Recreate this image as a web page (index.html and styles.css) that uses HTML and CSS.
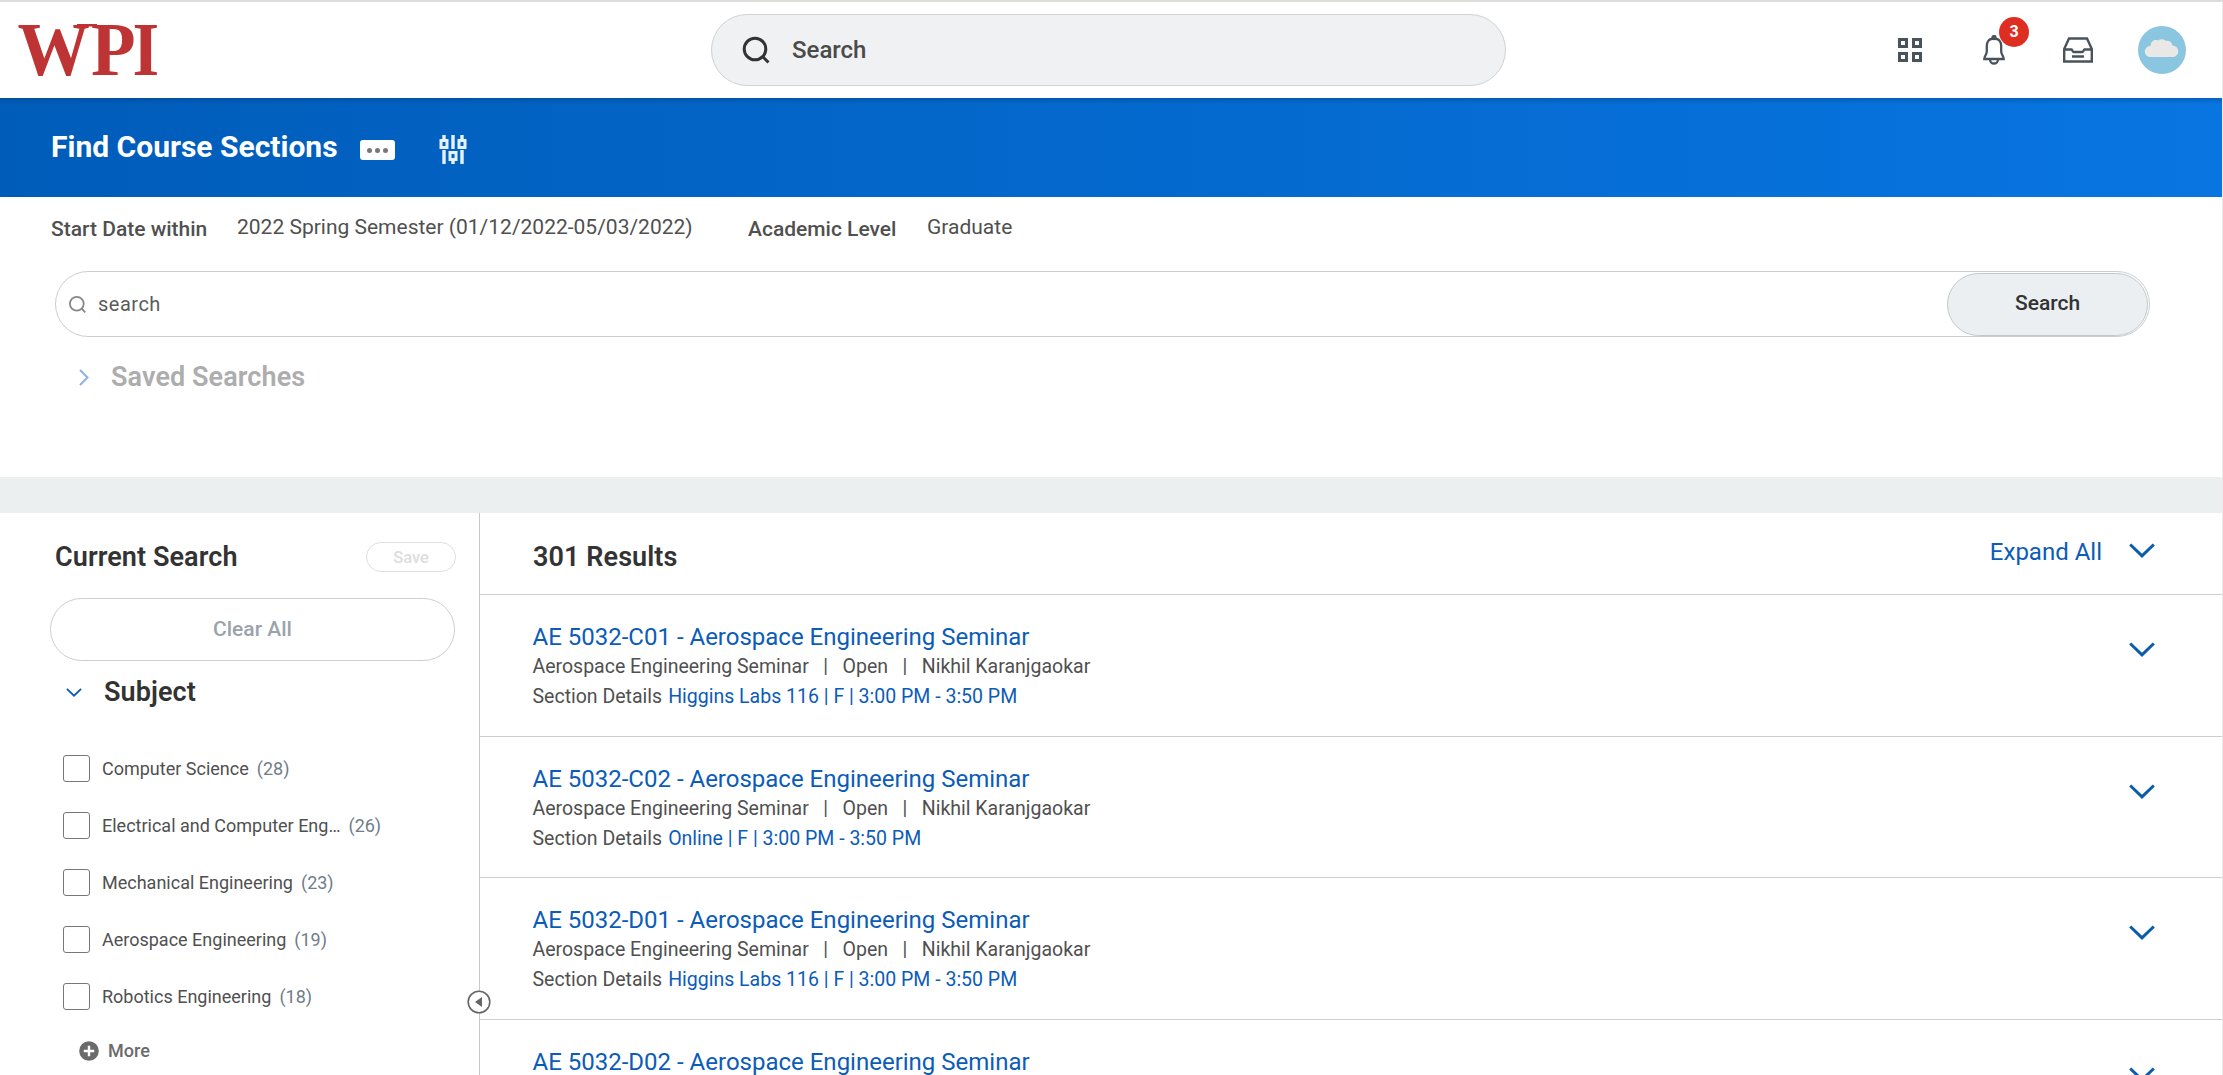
FILE: index.html
```html
<!DOCTYPE html>
<html lang="en">
<head>
<meta charset="utf-8">
<title>Find Course Sections</title>
<link rel="stylesheet" href="styles.css">
</head>
<body>
<svg class="defs" width="0" height="0">
  <symbol id="chevron" viewBox="0 0 26 15"><path d="M1.2 1.5 13 12.8 24.8 1.5" fill="none" stroke="currentColor" stroke-width="3"/></symbol>
</svg>
<div class="page">
  <header class="topbar">
    <svg class="logo" width="150" height="60" viewBox="0 0 150 60">
      <text transform="translate(.5 55) scale(.94 1)">W</text>
      <text transform="translate(74 55) scale(.95 1)">P</text>
      <text transform="translate(115.500 55) scale(.89 1)">I</text>
      <rect x="60" y="4" width="20" height="2.500"/>
    </svg>
    <div class="global-search">
      <svg width="28" height="28" viewBox="0 0 28 28" fill="none" stroke="#333" stroke-width="3"><circle cx="13" cy="13" r="10.8"/><path d="m20.5 20.5 6 6"/></svg>
      <span>Search</span>
    </div>
    <nav class="tools">
      <svg class="apps" width="24" height="24" viewBox="0 0 24 24" fill="none" stroke="#4a535b" stroke-width="3"><path d="M1.5 1.5h7v7h-7zM15.5 1.5h7v7h-7zM1.5 15.5h7v7h-7zM15.5 15.5h7v7h-7z"/></svg>
      <div class="bell">
        <svg width="24" height="30" viewBox="0 0 24 30" fill="none" stroke="#4a535b" stroke-width="2.3"><path d="M12 3.500C6.500 3.500 4.800 7.500 4.800 11v5.500c0 3-2.500 4.500-2.500 7.500h19.400c0-3-2.500-4.500-2.500-7.500V11c0-3.500-1.700-7.500-7.200-7.500z"/><path d="M8 24.500a4 4 0 0 0 8 0"/><circle cx="12" cy="2.500" r="1.500" fill="#4a535b"/></svg>
        <span class="badge">3</span>
      </div>
      <svg class="inbox" width="30" height="26" viewBox="0 0 30 26" fill="none" stroke="#4a535b" stroke-width="2.4"><path d="M1.200 12 6 1.500h18L28.800 12v12.500H1.200zM1.200 12.500h7.300c1 0 .8 2.500 2 2.500h9c1.200 0 1-2.500 2-2.500h7.300M9 19.500h12"/></svg>
      <svg class="avatar" width="48" height="48" viewBox="0 0 48 48"><circle cx="24" cy="24" r="24" fill="#8bc6e0"/><path d="M12 31a5 5 0 0 1 .5-11c.5-5 4-7 7.500-5.500 2.500-2 6-1.500 8 .5 3.500-1 6 1.500 6.500 4.500a5.800 5.800 0 0 1 1 11.500z" fill="#e9e8e6"/></svg>
    </nav>
  </header>

  <section class="titlebar">
    <h1>Find Course Sections</h1>
    <span class="more-actions"><i></i><i></i><i></i></span>
    <svg class="filters" width="28" height="29" viewBox="0 0 28 29" fill="none" stroke="#e6f3ff" stroke-width="3"><path d="M5 0v5M14 0v14M23 0v5M5 15v14M14 16v3M14 25v4M23 15v14" stroke-width="3.400"/><path d="M2 5.500h6v7H2zM20 5.500h6v7h-6zM11 17.500h6v7h-6z"/></svg>
  </section>

  <section class="criteria">
    <dl class="facts">
      <dt class="f1">Start Date within</dt><dd class="f2">2022 Spring Semester (01/12/2022-05/03/2022)</dd>
      <dt class="f3">Academic Level</dt><dd>Graduate</dd>
    </dl>
    <div class="search-box">
      <svg width="17" height="17" viewBox="0 0 17 17" fill="none" stroke="#888" stroke-width="1.800"><circle cx="7.800" cy="7.800" r="6.900"/><path d="m12.700 12.700 3.600 3.600"/></svg>
      <span class="query">search</span>
      <button>Search</button>
    </div>
    <div class="saved">
      <svg width="10" height="17" viewBox="0 0 10 17"><path d="m1 1 7.500 7.500L1 16" fill="none" stroke="#8db1e2" stroke-width="2"/></svg>
      <h2>Saved Searches</h2>
    </div>
  </section>

  <main class="results-layout">
    <aside class="sidebar">
      <div class="current"><h2>Current Search</h2><button class="save">Save</button></div>
      <button class="clear">Clear All</button>
      <div class="facet-head"><svg width="16" height="9"><use href="#chevron"/></svg><h2>Subject</h2></div>
      <ul class="facets">
        <li><i class="box"></i><span>Computer Science</span><b>(28)</b></li>
        <li><i class="box"></i><span>Electrical and Computer Eng…</span><b>(26)</b></li>
        <li><i class="box"></i><span>Mechanical Engineering</span><b>(23)</b></li>
        <li><i class="box"></i><span>Aerospace Engineering</span><b>(19)</b></li>
        <li><i class="box"></i><span>Robotics Engineering</span><b>(18)</b></li>
      </ul>
      <div class="more"><svg width="20" height="20" viewBox="0 0 20 20"><circle cx="10" cy="10" r="9.800" fill="#6b6b6b"/><path d="M10 4.800v10.400M4.800 10h10.400" stroke="#fff" stroke-width="2.400"/></svg><span>More</span></div>
      <svg class="collapse" width="24" height="24" viewBox="0 0 24 24"><circle cx="12" cy="12" r="10.800" fill="#fff" stroke="#666" stroke-width="1.600"/><path d="M8 12l7-5v10z" fill="#666"/></svg>
    </aside>
    <section class="results">
      <div class="results-head"><h2>301 Results</h2><a class="expand">Expand All</a><svg class="chev" width="26" height="15"><use href="#chevron"/></svg></div>
      <article>
        <div><h3>AE 5032-C01 - Aerospace Engineering Seminar</h3>
        <p class="meta"><span>Aerospace Engineering Seminar</span><span>|</span><span>Open</span><span>|</span><span>Nikhil Karanjgaokar</span></p>
        <p class="detail"><span>Section Details</span><a>Higgins Labs 116 | F | 3:00 PM - 3:50 PM</a></p></div>
        <svg class="chev" width="26" height="15"><use href="#chevron"/></svg>
      </article>
      <article>
        <div><h3>AE 5032-C02 - Aerospace Engineering Seminar</h3>
        <p class="meta"><span>Aerospace Engineering Seminar</span><span>|</span><span>Open</span><span>|</span><span>Nikhil Karanjgaokar</span></p>
        <p class="detail"><span>Section Details</span><a>Online | F | 3:00 PM - 3:50 PM</a></p></div>
        <svg class="chev" width="26" height="15"><use href="#chevron"/></svg>
      </article>
      <article>
        <div><h3>AE 5032-D01 - Aerospace Engineering Seminar</h3>
        <p class="meta"><span>Aerospace Engineering Seminar</span><span>|</span><span>Open</span><span>|</span><span>Nikhil Karanjgaokar</span></p>
        <p class="detail"><span>Section Details</span><a>Higgins Labs 116 | F | 3:00 PM - 3:50 PM</a></p></div>
        <svg class="chev" width="26" height="15"><use href="#chevron"/></svg>
      </article>
      <article>
        <div><h3>AE 5032-D02 - Aerospace Engineering Seminar</h3></div>
        <svg class="chev" width="26" height="15"><use href="#chevron"/></svg>
      </article>
    </section>
  </main>
</div>
</body>
</html>
```
FILE: styles.css
```css
* { box-sizing: border-box; }
body { margin: 0; background: #fff; font-family: Roboto, "Liberation Sans", sans-serif; color: #505050; }
h1, h2, h3, p, dl, dd, ul { margin: 0; padding: 0; }
button { font-family: inherit; padding: 0; }
svg { flex: none; }
.defs { position: absolute; }
.page { height: 1075px; overflow: hidden; border-top: 2px solid #dcdcdd; border-right: 1px solid #ececee; display: flex; flex-direction: column; }

/* top bar */
.topbar { height: 96px; flex: none; display: flex; align-items: center; padding: 0 36px 0 17px; }
.logo { margin-right: 544px; overflow: visible; fill: #be3434; }
.logo text { font: bold 77px "Liberation Serif", serif; }
.global-search { width: 795px; height: 72px; border: 1px solid #cfd1d6; border-radius: 36px; background: #eff1f3; display: flex; align-items: center; padding-left: 30px; gap: 22px; font-size: 24px; font-weight: 500; color: #4a4a4a; }
.tools { margin-left: auto; display: flex; align-items: center; }
.bell { position: relative; height: 30px; margin: 0 57px 0 60px; }
.badge { position: absolute; left: 17px; top: -18px; width: 30px; height: 30px; border-radius: 50%; background: #de2e21; color: #fff; font-size: 16px; font-weight: 700; line-height: 30px; text-align: center; }
.inbox { margin-right: 45px; }

/* page title */
.titlebar { height: 99px; flex: none; display: flex; align-items: center; padding-left: 51px; background: linear-gradient(rgba(0,50,100,.3), transparent 6px), linear-gradient(90deg, #005cb9, #0875e1); color: #fff; }
h1 { font-size: 30px; font-weight: 700; line-height: 36px; margin: -1px 22px 0 0; }
.more-actions { width: 35px; height: 20px; margin: 5px 44px 0 0; background: #fff; border-radius: 3px; display: flex; justify-content: center; align-items: center; gap: 3px; }
.more-actions i { width: 5px; height: 5px; border-radius: 50%; background: #777; }
.filters { margin-top: 4px; }

/* search criteria */
.criteria { height: 280px; flex: none; padding-left: 51px; }
.facts { display: flex; align-items: center; height: 60px; font-size: 21px; }
dt { font-weight: 500; padding-top: 3px; }
.f1 { width: 186px; }
.f2 { width: 511px; }
.f3 { width: 179px; }
.search-box { margin: 14px 0 0 4px; width: 2095px; height: 66px; border: 1px solid #ccced2; border-radius: 33px; display: flex; align-items: center; padding: 0 1px 0 13px; font-size: 20px; }
.query { margin-left: 12px; letter-spacing: .5px; color: #5c5c5c; }
.search-box button { margin-left: auto; width: 201px; height: 63px; border: 1px solid #c4c8ce; border-radius: 32px; background: #ebeff1; color: #333; font-size: 21px; font-weight: 500; padding-bottom: 2px; }
.saved { display: flex; align-items: center; gap: 22px; padding: 23px 0 0 28px; }
h2 { font-size: 27px; font-weight: 600; line-height: 34px; color: #333; letter-spacing: .08px; }
.saved h2 { color: #adadad; }

/* results */
.results-layout { flex: 1; min-height: 0; display: flex; border-top: 36px solid #ebeff0; }
.sidebar { position: relative; width: 480px; flex: none; border-right: 1px solid #c8c9cb; padding: 27px 24px 0 50px; }
.current { display: flex; align-items: center; justify-content: space-between; padding: 0 0 0 5px; margin-right: -1px; }
.save { width: 90px; height: 30px; border: 1px solid #dfdfe1; border-radius: 15px; background: #fff; color: #ddd; font-size: 16.5px; font-weight: 500; }
.clear { display: block; width: 405px; height: 63px; margin-top: 24px; border: 1px solid #ccced0; border-radius: 32px; background: #fff; color: #9aa3aa; font-size: 21px; font-weight: 500; padding-bottom: 1px; }
.facet-head { display: flex; align-items: center; gap: 22px; padding: 14px 0 0 16px; color: #0b5cad; }
.facets { list-style: none; padding: 31px 0 0 13px; }
.facets li { height: 57px; display: flex; align-items: center; font-size: 18px; }
.box { width: 27px; height: 27px; border: 1px solid #74777c; border-radius: 3px; margin-right: 12px; }
.facets b { font-weight: 400; color: #707d8a; margin-left: 8px; }
.more { display: flex; align-items: center; gap: 9px; padding: 15px 0 0 29px; font-size: 18px; font-weight: 500; color: #6b6b6b; }
.collapse { position: absolute; right: -12px; top: 477px; }
.results { flex: 1; min-width: 0; }
.results-head { height: 82px; display: flex; align-items: flex-start; padding: 27px 67px 0 53px; border-bottom: 1px solid #cccdcf; }
.expand { margin: -2px 27px 0 auto; font-size: 24px; color: #0b5cb8; }
.chev { color: #0b5cad; }
.results-head .chev { margin-top: 3px; }
article { height: 141.67px; display: flex; justify-content: space-between; padding: 27px 67px 0 52.5px; border-bottom: 1px solid #cccdcf; }
h3 { font-size: 24px; font-weight: 400; line-height: 31px; color: #0b5cb8; white-space: nowrap; }
article .chev { margin-top: 20px; }
.meta, .detail { font-size: 19.5px; line-height: 31px; display: flex; white-space: nowrap; }
.meta { line-height: 28px; gap: 14.5px; }
.detail { gap: 6px; }
.detail a { color: #0b5cb8; }
```
